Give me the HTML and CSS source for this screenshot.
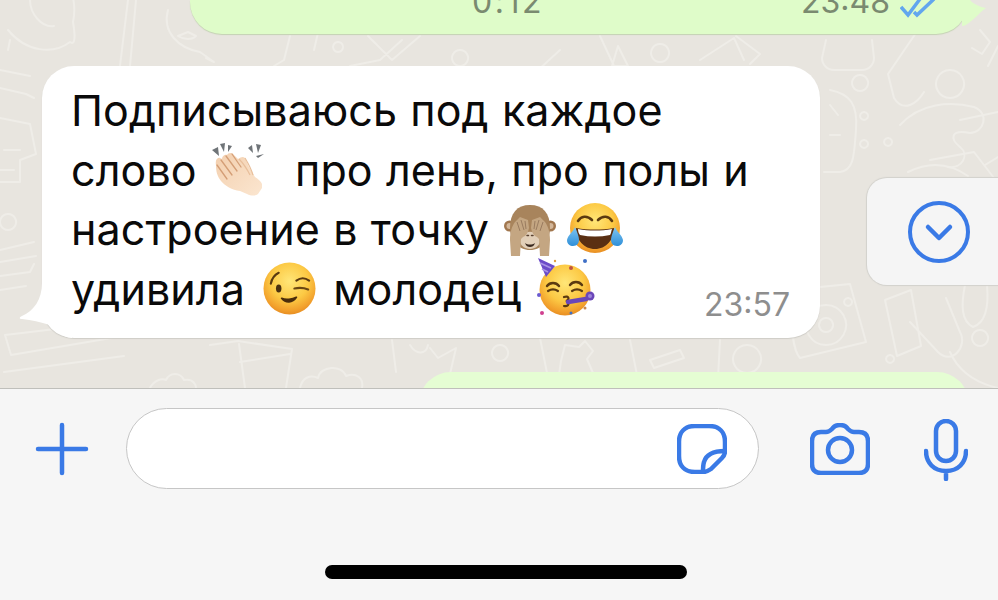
FILE: index.html
```html
<!DOCTYPE html>
<html lang="ru">
<head>
<meta charset="utf-8">
<title>Чат</title>
<link rel="stylesheet" href="styles.css">
</head>
<body>
<svg class="defs" aria-hidden="true">
  <defs>
    <radialGradient id="face" cx="50%" cy="36%" r="66%">
      <stop offset="0" stop-color="#ffe678"/>
      <stop offset=".55" stop-color="#fcc944"/>
      <stop offset=".85" stop-color="#f2a02c"/>
      <stop offset="1" stop-color="#e58a20"/>
    </radialGradient>
    <linearGradient id="tear" x1="0" y1="0" x2="0" y2="1">
      <stop offset="0" stop-color="#7fc6f2"/>
      <stop offset="1" stop-color="#2f8fd8"/>
    </linearGradient>
    <linearGradient id="skin" x1="0" y1="0" x2="1" y2="1">
      <stop offset="0" stop-color="#f3cfae"/>
      <stop offset="1" stop-color="#fbe6d0"/>
    </linearGradient>
  </defs>
</svg>
<main class="screen">
  <section class="chat">
    <svg class="wallpaper" viewBox="0 0 998 388" aria-hidden="true">
      <g fill="none" stroke="#efede8" stroke-width="2" stroke-linecap="round" stroke-linejoin="round">
        <path d="M8 30c18 22 45 25 62 12 8 6 3-20 3-20 4-18-2-40-12-46M30 0c0 14 12 28 24 26M10 40l-2 10"/>
        <path d="M128 0l-8 66M136 0l-6 66"/>
        <path d="M168 10c-6 22 10 38 32 42l14 10-8-4M178 36c6 4 14 4 18 0l-8-4z"/>
        <path d="M290 36l-6 24M284 60l-10 6M338 42a5 5 0 1 0 .1 0M368 36l24 24 28-24M350 66l30-6 22-20"/>
        <path d="M560 50l-24 22M600 36l14 30M612 66l6-20 10 20z"/>
        <path d="M660 44a9 9 0 1 0 .1 0M700 60l34-22 10 22M736 36l24 18-10 10"/>
        <path d="M826 40l-4 18a12 12 0 0 0 12 12h28a12 12 0 0 0 12-12l-2-18"/>
        <path d="M918 30l-30 44 6 24c10 16 24 4 30-6M950 70a14 14 0 1 0 .1 0M980 30l10 12-8 12-10-6M998 46l-10 20"/>
        <path d="M860 75a8 8 0 1 0 .1 0M864 112a4 4 0 1 0 .1 0M864 140a4 4 0 1 0 .1 0M888 138a4 4 0 1 0 .1 0"/>
        <path d="M830 90c20 4 28 14 26 40-2 26-2 40-16 42h-16M830 105l8 10M830 135h10"/>
        <path d="M900 125c20-22 50-24 74-18 16 6 10 26-4 26-20-4-20 6-10 14 10 8 2 22-12 20M930 160l44-8 20 26"/>
        <path d="M908 172c20-10 40-10 60 4"/>
        <path d="M960 120l38-8M985 165l13-8"/>
        <path d="M0 70l30 6M0 88l26 6 8 4M0 118l30 6 6 30-16 6v22H0M4 150h16M0 170h14"/>
        <path d="M8 214a8 8 0 1 0 .1 0M0 250l34-8M0 262l36-6M0 276l30-4 4-8M0 290l26-4"/>
        <path d="M5 335l118-14 6 14-118 20zM4 372l120-16"/>
        <path d="M150 388c4-8 12-10 16-8 4-8 14-8 18 0 10-2 12 6 12 8"/>
        <path d="M245 388l-6-44M210 345l28-4 54 8-6 39M240 362l50-8"/>
        <path d="M300 388c2-10 10-14 18-10 2-12 24-14 28-2 10-4 18 2 16 12"/>
        <path d="M392 340l4 32M410 345c6 10 16 10 18 0M430 348l8 10 18-10-6 26"/>
        <path d="M500 345a8 8 0 1 0 .1 0M540 338l8 40M565 345l14 2 6-6 8 10-6 8 6 14-14 4-8 6-12-8 2-14z"/>
        <path d="M630 340l8 40 80-2 2-38M650 360l30-10 4 8-30 10z"/>
        <path d="M747 345a14 14 0 1 0 .1 0"/>
        <path d="M790 290l60-6 16 58-66 16c-6-6-10-30-10-68zM826 305a20 20 0 1 0 .1 0M826 318a7 7 0 1 0 .1 0M848 298a4 4 0 1 0 .1 0"/>
        <path d="M885 300l12 56 24-10-10-56zM910 322l28 30c14 14 30-6 22-20l-14-34M965 285c-4 20-4 36 8 42 12-4 16-20 14-42"/>
        <path d="M980 330a8 8 0 1 0 .1 0M890 355a4 4 0 1 0 .1 0"/>
        <path d="M950 352c6 14 20 30 48 36"/>
        <path d="M320 24l-6 26M460 50a8 8 0 1 0 .1 0"/>
      </g>
    </svg>

    <article class="bubble bubble-out bubble-top">
      <span class="top-duration">0:12</span>
      <span class="top-meta">
        <span>23:48</span>
        <svg class="ticks" viewBox="0 0 36 20" aria-hidden="true">
          <path d="M1 9l7 8L20 1M14 14l3 3L34 1"/>
        </svg>
      </span>
      <svg class="tail tail-out" viewBox="0 0 30 36" aria-hidden="true">
        <path d="M0 0h6c2 6 8 10 18 12-6 4-8 8-16 14-4 3-6 4-8 4z"/>
      </svg>
    </article>

    <article class="bubble bubble-in">
      <svg class="tail tail-in" viewBox="0 0 42 50" aria-hidden="true">
        <path d="M22-8C22 8 14 20 2 25c-3 1.500-3 3 0 3 10 1 18 3 28 6 6 6 12 12 22 13V-8z"/>
      </svg>
      <p class="message">Подписываюсь под каждое<br>
      слово <svg class="emoji clap" viewBox="0 0 56 56" aria-hidden="true">
        <g fill="#6f7478">
          <path d="M3 9l6-3 1 9zM11 3l5-1-1 9zM19 4l4 1-4 6z"/>
          <path d="M39 7l4-3 1 8zM47 3l5 1-3 8zM55 13l-6 4-2-2z"/>
        </g>
        <path d="M7 24c-1-4 1-8 4-7l2 1c0-3 3-5 5-4 1-2 4-3 6-1l5 5c3-2 5-3 7-1l4 9 6 10c3 2 6 4 7 7v4l-4 6c-2 2-7 2-11 0l-7-3c-8-1-15-5-19-10-4-5-5-10-5-16z" fill="url(#skin)"/>
        <path d="M12 19l11 15M17 15l11 15M23 13l9 13M8 24l10 14" stroke="#d49e76" stroke-width="1.300" fill="none" stroke-linecap="round"/>
        <path d="M30 18c4 4 8 10 11 16M36 17c3 5 6 10 8 17" stroke="#e8bf9b" stroke-width="1.200" fill="none"/>
      </svg> про лень, про полы и<br>
      настроение в точку <svg class="emoji monkey" viewBox="0 0 52 52" aria-hidden="true">
        <circle cx="5.500" cy="22" r="5.500" fill="#a1774f"/>
        <circle cx="46.500" cy="22" r="5.500" fill="#a1774f"/>
        <circle cx="5.500" cy="22" r="3" fill="#d3b79a"/>
        <circle cx="46.500" cy="22" r="3" fill="#d3b79a"/>
        <path d="M26 1C13 1 6 9 6 24c0 12 8 22 20 22s20-10 20-22C46 9 39 1 26 1z" fill="#a8845c"/>
        <path d="M18 30c4-3 12-3 16 0 4 5 3 14-8 15-11-1-12-10-8-15z" fill="#e2cfb8"/>
        <path d="M21 39c3 2 7 2 10 0-1 3-3 4-5 4s-4-1-5-4z" fill="#3b2a20"/>
        <path d="M23 31.500h1.500M27.500 31.500H29" stroke="#5a4230" stroke-width="1.500" stroke-linecap="round"/>
        <path d="M7 52l-1-16c0-8 2-14 5-18l5-5 8 3 1 8c-1 5-3 8-6 9l-2 2-1 17z" fill="#c4a682"/>
        <path d="M45 52l1-16c0-8-2-14-5-18l-5-5-8 3-1 8c1 5 3 8 6 9l2 2 1 17z" fill="#c4a682"/>
        <path d="M13 18l3 9M17 16l3 10M21 17l1 8M39 18l-3 9M35 16l-3 10M31 17l-1 8" stroke="#9a7c60" stroke-width="1" fill="none"/>
      </svg> <svg class="emoji joy" viewBox="0 0 56 52" aria-hidden="true">
        <circle cx="28" cy="26" r="25" fill="url(#face)"/>
        <path d="M11 19c3-5 9-6 14-1M31 18c5-5 11-4 14 1" fill="none" stroke="#5b3a10" stroke-width="2.600" stroke-linecap="round"/>
        <path d="M9 26c12 2 26 2 38 0 0 12-8 21-19 21S9 38 9 26z" fill="#5a2f12"/>
        <path d="M11 27c11 2 23 2 34 0-1 3-1 5-2 6-10 2-20 2-30 0-1-1-2-3-2-6z" fill="#fff"/>
        <path d="M8 25c-2 5-7 8-8 13 0 4 3 6 6 6 4 0 6-3 6-6 0-4-2-8-4-13z" fill="url(#tear)"/>
        <path d="M48 25c2 5 7 8 8 13 0 4-3 6-6 6-4 0-6-3-6-6 0-4 2-8 4-13z" fill="url(#tear)"/>
      </svg><br>
      удивила <svg class="emoji wink" viewBox="0 0 54 54" aria-hidden="true">
        <circle cx="27" cy="27" r="26.500" fill="url(#face)"/>
        <path d="M8 22c1-5 4-9 8-11M34 19c4-3 9-3 13 0" fill="none" stroke="#5b3a10" stroke-width="2.200" stroke-linecap="round"/>
        <ellipse cx="16" cy="27" rx="2.800" ry="4.200" fill="#4a3010"/>
        <path d="M32 27c5-1 9-1 14 1" fill="none" stroke="#6a4612" stroke-width="2.200" stroke-linecap="round"/>
        <path d="M19 37c4 5 11 5 15-1-4 2-11 3-15 1z" stroke="#4a2d0c" stroke-width="1.800" fill="#4a2d0c" stroke-linejoin="round"/>
      </svg> молодец <svg class="emoji party" viewBox="0 0 58 58" aria-hidden="true">
        <circle cx="28" cy="32" r="25.500" fill="url(#face)"/>
        <path d="M1 0l17 8-9 11z" fill="#6b4bc8"/>
        <path d="M3 5l11 5M5 11l6 3" stroke="#a892e4" stroke-width="1.800"/>
        <path d="M10 28c3-4 9-4 12 0M33 27c3-4 9-4 12 0" fill="none" stroke="#5b3a10" stroke-width="2.400" stroke-linecap="round"/>
        <path d="M11 33c3-2 7-2 10 0M35 33c3-2 7-2 10 0" fill="none" stroke="#5b3a10" stroke-width="2.200" stroke-linecap="round"/>
        <path d="M27 39c5-2 6 3 2 4 4 1 3 6-2 5" fill="none" stroke="#5b3a10" stroke-width="2.200" stroke-linecap="round"/>
        <path d="M31 44l18-3" stroke="#6a46b8" stroke-width="4.500" stroke-linecap="round"/>
        <circle cx="53" cy="38" r="4.500" fill="#6a46b8"/>
        <circle cx="53" cy="38" r="2" fill="#9c84da"/>
        <g>
          <circle cx="34" cy="10" r="2" fill="#c0533f"/>
          <circle cx="48" cy="3" r="2" fill="#3f6fc6"/>
          <circle cx="2" cy="37" r="2" fill="#6b5bd0"/>
          <circle cx="5" cy="55" r="2" fill="#d0408f"/>
          <circle cx="34" cy="55" r="1.500" fill="#3f6fc6"/>
          <circle cx="48" cy="50" r="1.500" fill="#c9884c"/>
          <circle cx="18" cy="3" r="1.200" fill="#e0a040"/>
        </g>
      </svg></p>
      <time class="stamp">23:57</time>
    </article>

    <article class="bubble bubble-out bubble-bottom"></article>

    <button class="scroll-down" type="button" aria-label="Вниз">
      <svg viewBox="0 0 64 64" aria-hidden="true">
        <circle cx="32" cy="32" r="29" fill="none" stroke="#3a7ae6" stroke-width="4"/>
        <path d="M21 27l11 11 11-11" fill="none" stroke="#3a7ae6" stroke-width="4.500" stroke-linecap="round" stroke-linejoin="round"/>
      </svg>
    </button>
  </section>

  <footer class="composer">
    <div class="input-row">
      <svg class="icon icon-plus" viewBox="0 0 54 54" aria-hidden="true">
        <path d="M27 3v48M3 27h48"/>
      </svg>
      <div class="field">
        <svg class="icon icon-sticker" viewBox="0 0 50 50" aria-hidden="true">
          <path d="M48 27V18C48 8 42 2 32 2H18C8 2 2 8 2 18v14c0 10 6 16 16 16h8c3 0 5-1 8-3l11-11c2-2 3-4 3-7z"/>
          <path d="M26 48c0-3 0-7 1-10 2-7 8-11 21-11"/>
        </svg>
      </div>
      <svg class="icon icon-camera" viewBox="0 0 60 52" aria-hidden="true">
        <path d="M11 9h5c3 0 4-1 6-3 2-3 4-4 8-4s6 1 8 4c2 2 3 3 6 3h5c6 0 9 3 9 9v23c0 6-3 9-9 9H11c-6 0-9-3-9-9V18c0-6 3-9 9-9z"/>
        <circle cx="30" cy="27" r="12"/>
      </svg>
      <svg class="icon icon-mic" viewBox="0 0 44 62" aria-hidden="true">
        <rect x="12" y="2" width="20" height="40" rx="10"/>
        <path d="M2 32c0 12 8 20 20 20s20-8 20-20M22 52v8"/>
      </svg>
    </div>
    <div class="home-bar"></div>
  </footer>
</main>
</body>
</html>
```
FILE: styles.css
```css
* { box-sizing: border-box; }
html, body { margin: 0; padding: 0; }
body { width: 998px; height: 600px; overflow: hidden; font-family: Inter, "Liberation Sans", sans-serif; }
.defs { position: absolute; width: 0; height: 0; }

.screen { display: flex; flex-direction: column; width: 998px; height: 600px; }

.chat {
  position: relative;
  flex: 0 0 389px;
  display: flex;
  flex-direction: column;
  background: #e8e5df;
  border-bottom: 1px solid #bfbfbb;
  overflow: hidden;
}
.wallpaper { position: absolute; left: 0; top: 0; width: 998px; height: 388px; }

.bubble { position: relative; flex: none; }
.bubble-out { background: #dffcc9; }

.bubble-top {
  align-self: flex-end;
  width: 778px;
  height: 34px;
  margin-right: 30px;
  border-radius: 0 0 32px 32px;
  box-shadow: 0 1px 1px #c4d2b3;
  color: #7a8a70;
  font-size: 32px;
}
.top-duration { position: absolute; left: 282px; bottom: 13px; line-height: 38px; letter-spacing: 2.500px; }
.top-meta { position: absolute; right: 32px; bottom: 13px; display: flex; align-items: flex-end; gap: 10px; line-height: 38px; }
.ticks { width: 36px; height: 20px; margin-bottom: 3px; fill: none; stroke: #62a6ee; stroke-width: 3.500; }
.tail { position: absolute; overflow: visible; }
.tail-out { right: -24px; top: -4px; width: 30px; height: 36px; fill: #dffcc9; }

.bubble-in {
  align-self: flex-start;
  display: flex;
  width: 778px;
  height: 272px;
  margin: 32px 0 0 42px;
  padding: 15px 30px 14px 29px;
  background: #fff;
  border-radius: 32px;
  box-shadow: 0 1px 1px #cfcdc7;
}
.tail-in { left: -22px; top: 225px; width: 42px; height: 50px; fill: #fff; }
.message {
  flex: 1;
  min-width: 0;
  margin: 0;
  font-size: 43px;
  line-height: 59.500px;
  letter-spacing: 0.1px;
  word-spacing: 1px;
  color: #0a0a0a;
  white-space: nowrap;
}
.stamp { flex: none; align-self: flex-end; font-size: 32px; line-height: 38px; color: #8e8e8e; }

.emoji { display: inline-block; margin-top: -24px; }
.clap { width: 56px; height: 56px; margin-bottom: -11px; margin-left: -1px; margin-right: 17px; }
.monkey { width: 52px; height: 52px; margin-bottom: -11px; margin-left: 2px; margin-right: -3px; }
.joy { width: 56px; height: 52px; margin-bottom: -9px; margin-left: 1px; }
.wink { width: 53px; height: 53px; margin-bottom: -10px; margin-left: 5px; margin-right: 4px; }
.party { width: 58px; height: 58px; margin-bottom: -11px; margin-left: 3px; }

.bubble-bottom {
  align-self: flex-end;
  width: 550px;
  height: 40px;
  margin: 34px 29px 0 0;
  border-radius: 32px 32px 0 0;
  background: #e5fdd3;
}

.scroll-down {
  position: absolute;
  left: 867px;
  top: 178px;
  width: 150px;
  height: 107px;
  padding: 0 0 0 40px;
  display: flex;
  align-items: center;
  background: #f5f5f5;
  border: 0;
  border-radius: 20px;
  box-shadow: 0 0 1px 1px #d2d1cc;
}
.scroll-down svg { width: 64px; height: 64px; }

.composer {
  flex: 1;
  display: flex;
  flex-direction: column;
  background: #f6f6f6;
}
.input-row { display: flex; align-items: center; height: 81px; margin-top: 19px; padding-left: 35px; }
.icon { flex: none; fill: none; stroke: #3a7ae6; stroke-width: 4.500; stroke-linecap: round; stroke-linejoin: round; }
.icon-plus { width: 54px; height: 54px; }
.field {
  flex: none;
  display: flex;
  align-items: center;
  justify-content: flex-end;
  width: 633px;
  height: 81px;
  margin-left: 37px;
  padding-right: 31px;
  background: #fff;
  border: 1px solid #c6c6c6;
  border-radius: 41px;
}
.icon-sticker { width: 50px; height: 50px; }
.icon-camera { width: 60px; height: 52px; margin-left: 51px; }
.icon-mic { width: 44px; height: 62px; margin-left: 54px; margin-top: 2px; }

.home-bar { width: 362px; height: 14px; margin: 76px 0 0 325px; background: #000; border-radius: 7px; }
```
